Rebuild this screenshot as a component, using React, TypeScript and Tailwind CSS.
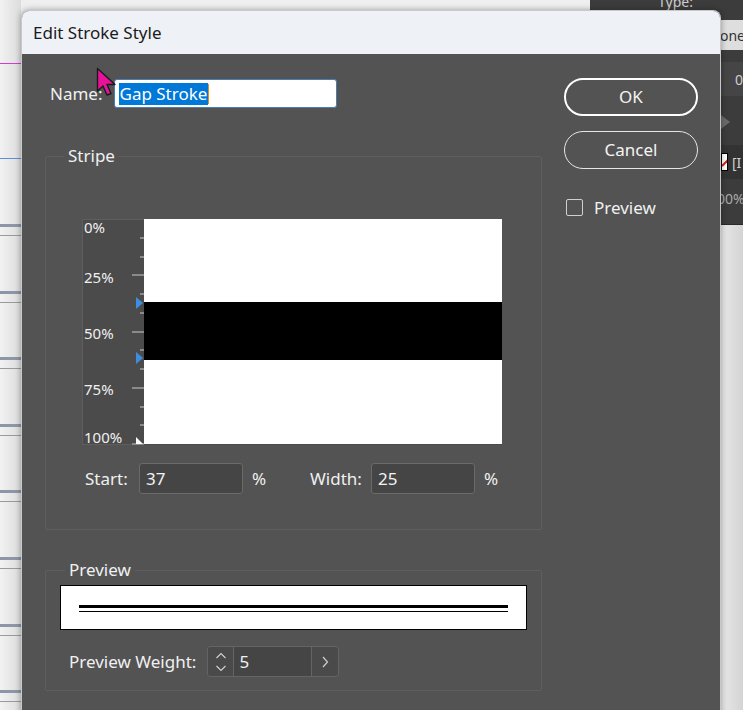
import React from 'react'

const font = { fontFamily: '"Noto Sans", "Open Sans", sans-serif' }

// ruler ticks at every 1/12 of the stripe height
const ticks = Array.from({ length: 12 }, (_, i) => i + 1)

function Ruler() {
  return (
    <div className="relative w-[62px] h-[226px] bg-[#4b4b4b] border border-[#5e5e5e] border-r-0 text-[15px] text-[#f0f0f0] leading-none">
      <span className="absolute left-[1px] top-[0px]">0%</span>
      <span className="absolute left-[1px] top-[50px]">25%</span>
      <span className="absolute left-[1px] top-[106px]">50%</span>
      <span className="absolute left-[1px] top-[162px]">75%</span>
      <span className="absolute left-[1px] top-[210px]">100%</span>
      {ticks.map(i => (
        <div
          key={i}
          className={`absolute right-0 h-[2px] bg-[#8a8a8a] ${i % 3 === 0 ? 'w-[12px]' : 'w-[4px]'}`}
          style={{ top: Math.round((225 * i) / 12) - 2 }}
        />
      ))}
      <svg className="absolute right-[1px] top-[77px]" width="7" height="12" viewBox="0 0 7 12">
        <path d="M0 0 L7 6 L0 12 Z" fill="#3d8ee0" />
      </svg>
      <svg className="absolute right-[1px] top-[132px]" width="7" height="12" viewBox="0 0 7 12">
        <path d="M0 0 L7 6 L0 12 Z" fill="#3d8ee0" />
      </svg>
      <svg className="absolute right-[1px] bottom-0" width="7" height="7" viewBox="0 0 7 7">
        <path d="M0 0 L7 7 L0 7 Z" fill="#ffffff" />
      </svg>
    </div>
  )
}

function Field({ value, w }: { value: string; w: string }) {
  return (
    <div className={`${w} h-[31px] bg-[#454545] border border-[#6a6a6a] rounded-[3px] px-[6px] flex items-center text-[17px] text-[#f2f2f2]`}>
      {value}
    </div>
  )
}

function Cursor() {
  return (
    <svg className="absolute left-[74px] top-[13px]" width="24" height="32" viewBox="0 0 24 32">
      <path
        d="M1.5 1.5 L1.5 24 L7 19 L11 28 L15 26.5 L11 17.5 L19 17.5 Z"
        fill="#e8129a"
        stroke="#1a1a1a"
        strokeWidth="1.4"
        strokeLinejoin="round"
      />
    </svg>
  )
}

export default function App() {
  return (
    <div className="relative w-[743px] h-[710px] overflow-hidden bg-[#efefef]" style={font}>
      {/* document canvas behind the dialog */}
      <div className="absolute left-0 top-0 w-[21px] h-[710px] bg-gradient-to-r from-[#f2f2f2] to-[#dcdcdc]">
        <div className="absolute left-0 top-[63px] w-full h-px bg-[#d63ad6]" />
        <div className="absolute left-0 top-[158px] w-full h-px bg-[#5b8fd8]" />
        {Array.from({ length: 8 }, (_, i) => (
          <div key={i} className="absolute left-0 w-full" style={{ top: 224 + i * 66.6 }}>
            <div className="h-[3px] bg-[#8d96a6]" />
            <div className="h-px mt-[8px] bg-[#9a9a9a]" />
          </div>
        ))}
      </div>
      {/* panel on the right */}
      <div className="absolute left-[590px] top-0 w-[153px] h-[224px] bg-[#3c3c3c] text-[14px] text-[#cfcfcf]">
        <span className="absolute left-[68px] -top-[9px]">Type:</span>
        <div className="absolute left-[131px] top-[20px] w-[30px] h-[30px] bg-[#dedede] text-[#333] flex items-center">
          <span className="-ml-[1px]">one</span>
        </div>
        <div className="absolute left-[131px] top-[62px] w-[30px] h-[34px] bg-[#454545] flex items-center pl-[14px]">0</div>
        <svg className="absolute left-[131px] top-[115px]" width="10" height="14" viewBox="0 0 10 14">
          <path d="M0 0 L9 7 L0 14 Z" fill="#6a6a6a" />
        </svg>
        <div className="absolute left-[131px] top-[145px] w-[30px] h-[34px] bg-[#333] flex items-center gap-[4px]">
          <div className="w-[7px] h-[18px] bg-white border border-black relative overflow-hidden">
            <div className="absolute -left-[2px] top-[6px] w-[14px] h-[2px] bg-[#e02020] -rotate-45" />
          </div>
          <span className="text-[#d0d0d0]">[I</span>
        </div>
        <div className="absolute left-[131px] top-[188px] text-[#aaa]">
          <span className="-ml-[4px]">00%</span>
        </div>
      </div>
      <div className="absolute left-[721px] top-[224px] w-[22px] h-[486px] bg-gradient-to-r from-[#e8e8e8] to-[#d4d4d4] border-t border-[#2a2a2a]" />

      {/* dialog */}
      <div className="absolute left-[21px] top-[10px] w-[700px] h-[720px] rounded-t-[8px] overflow-hidden bg-[#535353] shadow-[0_0_6px_rgba(0,0,0,0.35)] border border-[#c8c8c8] border-b-0">
        <div className="h-[43px] bg-[#eef2f6] flex items-center pl-[11px] text-[17px] text-[#1b1b1b]">
          Edit Stroke Style
        </div>
        <div className="relative flex text-[17px] text-[#f0f0f0]">
          <Cursor />
          <div className="flex flex-col w-[520px]">
            <div className="flex items-center h-[29px] mt-[25px] pl-[28px] gap-[11px]">
              <span>Name:</span>
              <div className="w-[223px] h-[29px] bg-white border border-[#4a7cb5] rounded-[3px] flex items-center px-[4px]">
                <span className="bg-[#0078d7] text-white leading-[22px] px-px">Gap Stroke</span>
                <span className="w-px h-[20px] bg-[#e09020]" />
              </div>
            </div>

            <fieldset className="ml-[23px] mt-[38px] w-[497px] h-[384px] border border-[#5f5f5f] rounded-[2px]">
              <legend className="ml-[18px] px-[4px] leading-[20px]">Stripe</legend>
              <div className="flex mt-[53px] pl-[36px]">
                <Ruler />
                <div className="w-[358px] h-[226px] bg-white flex flex-col border-b border-[#4a4a4a]">
                  <div className="h-[83px]" />
                  <div className="h-[58px] bg-black" />
                </div>
              </div>
              <div className="flex items-center mt-[18px] pl-[39px]">
                <span className="w-[54px]">Start:</span>
                <Field value="37" w="w-[104px]" />
                <span className="ml-[9px] w-[58px]">%</span>
                <span className="w-[61px]">Width:</span>
                <Field value="25" w="w-[104px]" />
                <span className="ml-[9px]">%</span>
              </div>
            </fieldset>

            <fieldset className="ml-[23px] mt-[30px] w-[497px] h-[131px] border border-[#5f5f5f] rounded-[2px]">
              <legend className="ml-[19px] px-[4px] leading-[20px]">Preview</legend>
              <div className="mx-[14px] mt-[5px] h-[45px] bg-white border border-black flex flex-col justify-center px-[18px]">
                <div className="h-[3px] bg-black mt-[2px]" />
                <div className="h-px bg-black mt-[3px]" />
              </div>
              <div className="flex items-center mt-[16px] ml-[23px] gap-[11px]">
                <span>Preview Weight:</span>
                <div className="flex h-[31px] border border-[#646464] rounded-[3px] bg-[#4a4a4a]">
                  <div className="w-[26px] flex flex-col items-center justify-center border-r border-[#646464]">
                    <svg width="12" height="22" viewBox="0 0 12 22" fill="none" stroke="#cfcfcf" strokeWidth="1.2">
                      <path d="M1.5 7 L6 2.5 L10.5 7" />
                      <path d="M1.5 15 L6 19.5 L10.5 15" />
                    </svg>
                  </div>
                  <div className="w-[77px] bg-[#454545] flex items-center px-[5px] text-[17px]">5</div>
                  <div className="w-[27px] flex items-center justify-center border-l border-[#646464]">
                    <svg width="8" height="14" viewBox="0 0 8 14" fill="none" stroke="#cfcfcf" strokeWidth="1.2">
                      <path d="M2 2 L6.5 7 L2 12" />
                    </svg>
                  </div>
                </div>
              </div>
            </fieldset>
          </div>

          <div className="flex flex-col ml-[22px] w-[134px] pt-[24px]">
            <button className="h-[38px] rounded-full border-2 border-white text-[17px] text-[#f4f4f4]">OK</button>
            <button className="h-[38px] mt-[15px] rounded-full border border-[#e6e6e6] text-[17px] text-[#f4f4f4]">Cancel</button>
            <div className="flex items-center mt-[26px] ml-[2px] gap-[11px]">
              <div className="w-[17px] h-[17px] border border-[#d0d0d0] rounded-[2px]" />
              <span>Preview</span>
            </div>
          </div>
        </div>
      </div>
    </div>
  )
}
